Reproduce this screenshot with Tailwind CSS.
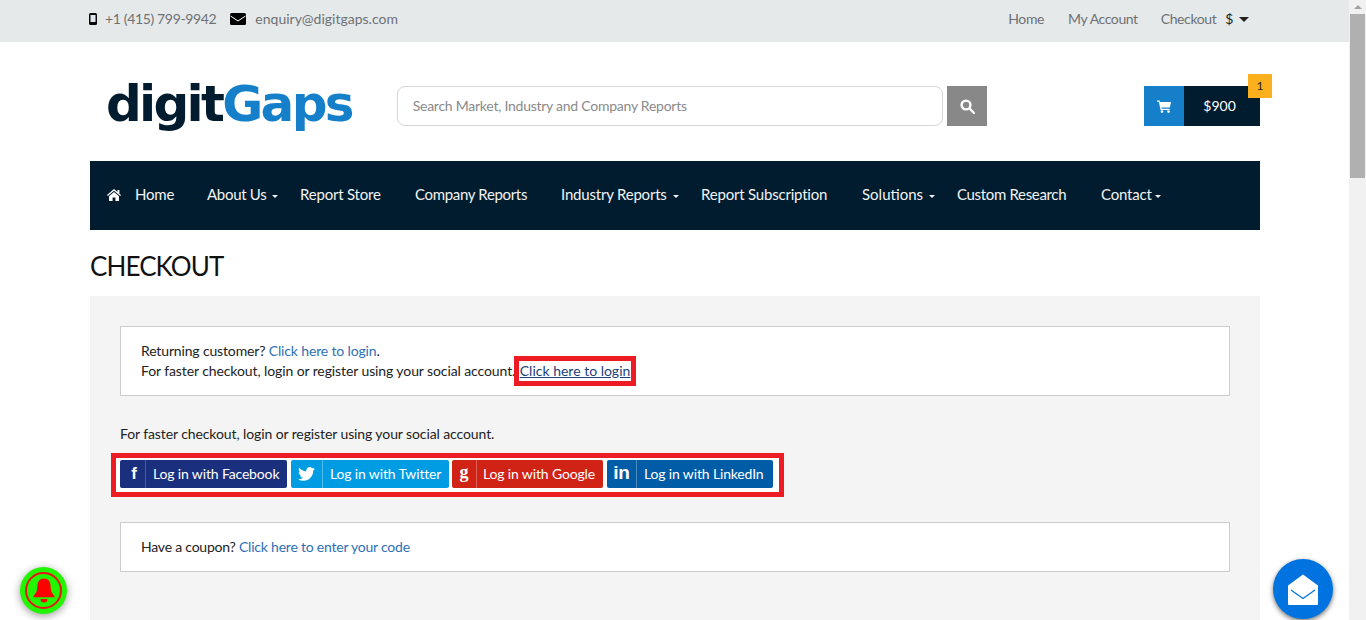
<!DOCTYPE html>
<html lang="en">
<head>
    <meta charset="UTF-8">
    <meta name="viewport" content="width=device-width, initial-scale=1.0">
    <title>Checkout</title>
    <script src="https://cdn.jsdelivr.net/npm/@tailwindcss/browser@4"></script>
</head>
<body class="h-[620px] overflow-hidden bg-white font-['Lato','Noto_Sans',sans-serif] text-[14px] text-[#222]">
    <div class="flex h-[620px]">
        <div class="relative w-[1349px] shrink-0 overflow-hidden">
            <!-- Top bar -->
            <div class="h-[42px] bg-[#e6e9ea] text-[#6d7175]">
                <div class="ml-[90px] flex h-full w-[1170px] items-center justify-between pb-[5px]">
                    <div class="flex items-center">
                        <svg class="ml-[-1px] mr-[8px]" width="8" height="12" viewBox="0 0 8 12"><rect width="8" height="12" rx="1.5" fill="#0a0a0a"/><rect x="1.5" y="2" width="5" height="7" fill="#dfe6ee"/></svg>
                        <span class="tracking-[-0.35px]">+1 (415) 799-9942</span>
                        <svg class="ml-[14px] mr-[9px]" width="16" height="12" viewBox="0 0 16 12"><rect width="16" height="12" rx="1.5" fill="#000"/><path d="M0.5 3 L8 8 L15.5 3" fill="none" stroke="#fff" stroke-width="1"/></svg>
                        <span>enquiry@digitgaps.com</span>
                    </div>
                    <div class="mr-[11px] flex items-center tracking-[-0.4px]">
                        <span>Home</span>
                        <span class="ml-[24px]">My Account</span>
                        <span class="ml-[23px]">Checkout</span>
                        <span class="ml-[9px] text-[#222]">$</span>
                        <span class="ml-[6px] mt-[2px] border-x-[5px] border-t-[5px] border-x-transparent border-t-[#222]"></span>
                    </div>
                </div>
            </div>

            <!-- Logo, search, cart -->
            <div class="ml-[90px] flex h-[119px] w-[1170px] items-center pt-[9px]">
                <div class="ml-[16px] w-[291px] pb-[5px] font-['DejaVu_Sans',sans-serif] text-[50px] leading-none font-bold tracking-[-2.7px] whitespace-nowrap"><span class="text-[#011c2e]">digit</span><span class="text-[#1580c9]">Gaps</span></div>
                <div class="flex h-[40px] w-[547px] items-center rounded-[8px] border border-[#d5d5d5] px-[15px] pb-[1px] tracking-[-0.25px] text-[#8a8a8a]">Search Market, Industry and Company Reports</div>
                <div class="ml-[4px] flex h-[40px] w-[40px] items-center justify-center bg-[#888]">
                    <svg width="15" height="15" viewBox="0 0 15 15" fill="none" stroke="#fff" stroke-width="2.4"><circle cx="6" cy="6" r="4.4"/><path d="M9.5 9.5 L14 14" stroke-linecap="round"/></svg>
                </div>
                <div class="relative ml-[157px] flex h-[40px] w-[116px]">
                    <div class="flex w-[40px] items-center justify-center bg-[#1580c9]">
                        <svg width="14" height="13" viewBox="0 0 14 13" fill="#fff"><path d="M0 0.5h2.6l0.5 1.5H14l-1.2 5.6H4.4l0.3 1.2h8v1.2H3.6L1.8 1.7H0z"/><circle cx="5" cy="11.6" r="1.3"/><circle cx="11.5" cy="11.6" r="1.3"/></svg>
                    </div>
                    <div class="flex flex-1 items-center justify-center bg-[#011c2e] pb-[1px] pr-[5px] text-white">$900</div>
                    <div class="absolute right-[-12px] top-[-12px] flex h-[24px] w-[24px] items-center justify-center bg-[#fdb01e] text-[12px] text-[#222]">1</div>
                </div>
            </div>

            <!-- Nav -->
            <nav class="relative ml-[90px] flex h-[69px] w-[1170px] items-center bg-[#011c2e] pb-[2px] text-[15px] tracking-[-0.2px] text-[#f1f3f4] whitespace-nowrap">
                <svg class="ml-[17px]" width="14" height="12" viewBox="0 0 14 12" fill="#fff"><path d="M7 0 L10.5 3V1H12.4V4.7L14 6.1 13.2 7 7 1.8 0.8 7 0 6.1z"/><path d="M7 3 L12 7.2V12H8.4V8.5H5.6V12H2V7.2z"/></svg>
                <span class="ml-[14px] w-[72px]">Home</span>
                <span class="w-[64px] tracking-[-0.3px]">About Us</span>
                <span class="w-[29px]"><span class="ml-[1px] inline-block border-x-[3px] border-t-[3px] border-x-transparent border-t-[#f1f3f4] align-middle"></span></span>
                <span class="w-[115px]">Report Store</span>
                <span class="w-[146px] tracking-[-0.33px]">Company Reports</span>
                <span class="w-[111px]">Industry Reports</span>
                <span class="w-[29px]"><span class="ml-[1px] inline-block border-x-[3px] border-t-[3px] border-x-transparent border-t-[#f1f3f4] align-middle"></span></span>
                <span class="w-[161px]">Report Subscription</span>
                <span class="w-[66px] tracking-[0px]">Solutions</span>
                <span class="w-[29px]"><span class="ml-[1px] inline-block border-x-[3px] border-t-[3px] border-x-transparent border-t-[#f1f3f4] align-middle"></span></span>
                <span class="w-[144px] tracking-[-0.33px]">Custom Research</span>
                <span class="w-[50px]">Contact</span>
                <span><span class="ml-[4px] inline-block border-x-[3px] border-t-[3px] border-x-transparent border-t-[#f1f3f4] align-middle"></span></span>
            </nav>

            <h1 class="ml-[90px] mt-[19px] text-[26px] leading-[34px] tracking-[-0.9px] text-[#111]">CHECKOUT</h1>

            <!-- Checkout panel -->
            <div class="ml-[90px] mt-[13px] h-[400px] w-[1170px] bg-[#f4f4f4] px-[30px] pt-[30px]">
                <div class="h-[70px] border border-[#ccc] bg-white px-[20px] pt-[14px] leading-[20px]">
                    <p class="tracking-[-0.15px]">Returning customer? <a class="text-[#2f6fb5]">Click here to login</a>.</p>
                    <p class="tracking-[-0.1px]">For faster checkout, login or register using your social account. <a class="inline-block px-[1px] leading-[20px] tracking-normal text-[#1d3f7a] underline outline-[5px] outline-[#ed1c24]">Click here to login</a></p>
                </div>
                <p class="mt-[28px] leading-[20px] tracking-[-0.1px]">For faster checkout, login or register using your social account.</p>
                <div class="mx-[-9px] mt-[9px] flex h-[44px] w-[673px] items-start gap-[4px] border-[5px] border-[#ed1c24] bg-white px-[4px] pt-[2px] tracking-[-0.15px] text-white">
                    <a class="flex h-[28px] w-[167px] items-center rounded-[2px] bg-[#1a2f7e] pb-[1px]">
                        <span class="flex h-[28px] w-[26px] shrink-0 items-center justify-center border-r border-[#4a5c9c] pl-[3px] font-['Liberation_Sans',sans-serif] text-[17px] font-bold">f</span>
                        <span class="pl-[7px]">Log in with Facebook</span>
                    </a>
                    <a class="flex h-[28px] w-[158px] items-center rounded-[2px] bg-[#009ce3] pb-[1px]">
                        <span class="flex h-[28px] w-[32px] shrink-0 items-center justify-center border-r border-[#4dbcef]">
                            <svg width="17" height="14" viewBox="0 0 24 20" fill="#fff"><path d="M23.953 2.57a10 10 0 01-2.825.775 4.958 4.958 0 002.163-2.723c-.951.555-2.005.959-3.127 1.184a4.92 4.92 0 00-8.384 4.482C7.69 6.095 4.067 4.13 1.64 1.162a4.822 4.822 0 00-.666 2.475c0 1.71.87 3.213 2.188 4.096a4.904 4.904 0 01-2.228-.616v.06a4.923 4.923 0 003.946 4.827 4.996 4.996 0 01-2.212.085 4.936 4.936 0 004.604 3.417 9.867 9.867 0 01-6.102 2.105c-.39 0-.779-.023-1.17-.067a13.995 13.995 0 007.557 2.209c9.053 0 13.998-7.496 13.998-13.985 0-.21 0-.42-.015-.63A9.935 9.935 0 0024 2.59z"/></svg>
                        </span>
                        <span class="pl-[7px]">Log in with Twitter</span>
                    </a>
                    <a class="ml-[-1px] flex h-[28px] w-[151px] items-center rounded-[2px] bg-[#d02316] pb-[1px]">
                        <span class="flex h-[28px] w-[25px] shrink-0 items-center justify-center border-r border-[#de6057] pb-[3px] font-['Liberation_Serif',serif] text-[18px] font-bold">g</span>
                        <span class="pl-[6px]">Log in with Google</span>
                    </a>
                    <a class="flex h-[28px] w-[166px] items-center rounded-[2px] bg-[#005ca6] pb-[1px]">
                        <span class="flex h-[28px] w-[30px] shrink-0 items-center justify-center border-r border-[#4d8dc1] font-['Liberation_Sans',sans-serif] text-[19px] font-bold">in</span>
                        <span class="pl-[7px]">Log in with LinkedIn</span>
                    </a>
                </div>
                <div class="mt-[25px] flex h-[50px] items-center border border-[#ccc] bg-white px-[20px] pb-[2px] tracking-[-0.22px]">
                    <p>Have a coupon? <a class="text-[#2f6fb5]">Click here to enter your code</a></p>
                </div>
            </div>

            <!-- Floating bell -->
            <div class="absolute left-[20px] top-[567px] flex h-[47px] w-[47px] items-center justify-center rounded-full bg-[#22f500] shadow-[0_2px_8px_rgba(0,0,0,0.4)]">
                <div class="flex h-[37px] w-[37px] items-center justify-center rounded-full border-2 border-[#e8141c]">
                    <svg width="24" height="28" viewBox="0 0 24 28" fill="#ff0000"><path d="M12 1.5c4.6 0 6.6 3.6 6.6 7.5 0 5 1.6 7.5 3.9 10v1.2h-21V19c2.300-2.500 3.900-5 3.900-10 0-3.900 2-7.500 6.500-7.500z"/><path d="M8.500 22h7a3.500 3.500 0 01-7 0z"/></svg>
                </div>
            </div>
            <!-- Floating mail -->
            <div class="absolute left-[1273px] top-[559px] flex h-[60px] w-[60px] items-center justify-center rounded-full bg-[#0073e0] shadow-[0_2px_5px_rgba(0,0,0,0.55)]">
                <svg width="32" height="32" viewBox="0 0 32 32"><path d="M16 1.500 L31 12.500 V31 a1 1 0 01-1 1 H2 a1 1 0 01-1-1 V12.500z" fill="#fff"/><path d="M4 17 L16 25.500 L28 17" fill="none" stroke="#0073e0" stroke-width="1.200"/></svg>
            </div>
        </div>

        <!-- Page scrollbar -->
        <div class="flex h-[620px] w-[17px] flex-col bg-[#f1f1f1]">
            <div class="flex h-[14px] items-center justify-center"><span class="border-x-[4px] border-b-[4px] border-x-transparent border-b-[#a3a3a3]"></span></div>
            <div class="ml-[1px] h-[164px] w-[15px] bg-[#b0b0b0]"></div>
        </div>
    </div>
</body>
</html>
